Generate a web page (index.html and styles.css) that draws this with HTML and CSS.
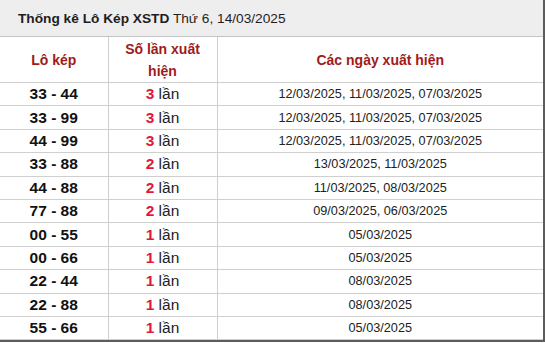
FILE: index.html
```html
<!DOCTYPE html>
<html lang="vi">
<head>
<meta charset="utf-8">
<title>Thống kê Lô Kép XSTD</title>
<link rel="stylesheet" href="styles.css">
</head>
<body>
<div class="box">
  <div class="title"><b>Thống kê Lô Kép XSTD</b> Thứ 6, 14/03/2025</div>
  <table class="stats">
    <colgroup><col class="c1"><col class="c2"><col class="c3"></colgroup>
    <thead>
      <tr><th>Lô kép</th><th>Số lần xuất hiện</th><th>Các ngày xuất hiện</th></tr>
    </thead>
    <tbody>
      <tr><td class="pair">33 - 44</td><td class="cnt"><b>3</b> lần</td><td class="dates">12/03/2025, 11/03/2025, 07/03/2025</td></tr>
      <tr><td class="pair">33 - 99</td><td class="cnt"><b>3</b> lần</td><td class="dates">12/03/2025, 11/03/2025, 07/03/2025</td></tr>
      <tr><td class="pair">44 - 99</td><td class="cnt"><b>3</b> lần</td><td class="dates">12/03/2025, 11/03/2025, 07/03/2025</td></tr>
      <tr><td class="pair">33 - 88</td><td class="cnt"><b>2</b> lần</td><td class="dates">13/03/2025, 11/03/2025</td></tr>
      <tr><td class="pair">44 - 88</td><td class="cnt"><b>2</b> lần</td><td class="dates">11/03/2025, 08/03/2025</td></tr>
      <tr><td class="pair">77 - 88</td><td class="cnt"><b>2</b> lần</td><td class="dates">09/03/2025, 06/03/2025</td></tr>
      <tr><td class="pair">00 - 55</td><td class="cnt"><b>1</b> lần</td><td class="dates">05/03/2025</td></tr>
      <tr><td class="pair">00 - 66</td><td class="cnt"><b>1</b> lần</td><td class="dates">05/03/2025</td></tr>
      <tr><td class="pair">22 - 44</td><td class="cnt"><b>1</b> lần</td><td class="dates">08/03/2025</td></tr>
      <tr><td class="pair">22 - 88</td><td class="cnt"><b>1</b> lần</td><td class="dates">08/03/2025</td></tr>
      <tr><td class="pair">55 - 66</td><td class="cnt"><b>1</b> lần</td><td class="dates">05/03/2025</td></tr>
    </tbody>
  </table>
</div>
</body>
</html>
```

FILE: styles.css
```css
html, body {
  margin: 0;
  padding: 0;
  background: #fff;
}
body {
  font-family: "Liberation Sans", Arial, sans-serif;
  color: #222;
}
.box {
  width: 543px;
  border-right: 2px solid #5c5c5c;
  border-bottom: 2px solid #5c5c5c;
}
.title {
  height: 37px;
  box-sizing: border-box;
  padding: 10px 0 0 18px;
  background: #efeeee;
  border-bottom: 1px solid #c4c4c4;
  font-size: 13.7px;
  line-height: 17px;
  color: #1e1e1e;
}
.stats {
  width: 543px;
  border-collapse: collapse;
  table-layout: fixed;
}
.c1 { width: 108px; }
.c2 { width: 109px; }
.stats th, .stats td {
  padding: 0;
  text-align: center;
  border-bottom: 1px solid #cfcfcf;
  border-left: 1px solid #cfcfcf;
}
.stats th:first-child, .stats td:first-child {
  border-left: none;
}
.stats th {
  height: 45px;
  color: #a11a1a;
  font-size: 14px;
  font-weight: bold;
  line-height: 22px;
}
.stats th:nth-child(2) {
  padding: 0 12px;
}
.stats td {
  height: 22.4px;
  line-height: 20px;
}
.pair {
  font-size: 15.5px;
  font-weight: bold;
  color: #111;
}
.cnt {
  font-size: 15.5px;
  color: #222;
}
.cnt b {
  color: #e2183a;
}
.dates {
  font-size: 12.7px;
  color: #222;
}
```
